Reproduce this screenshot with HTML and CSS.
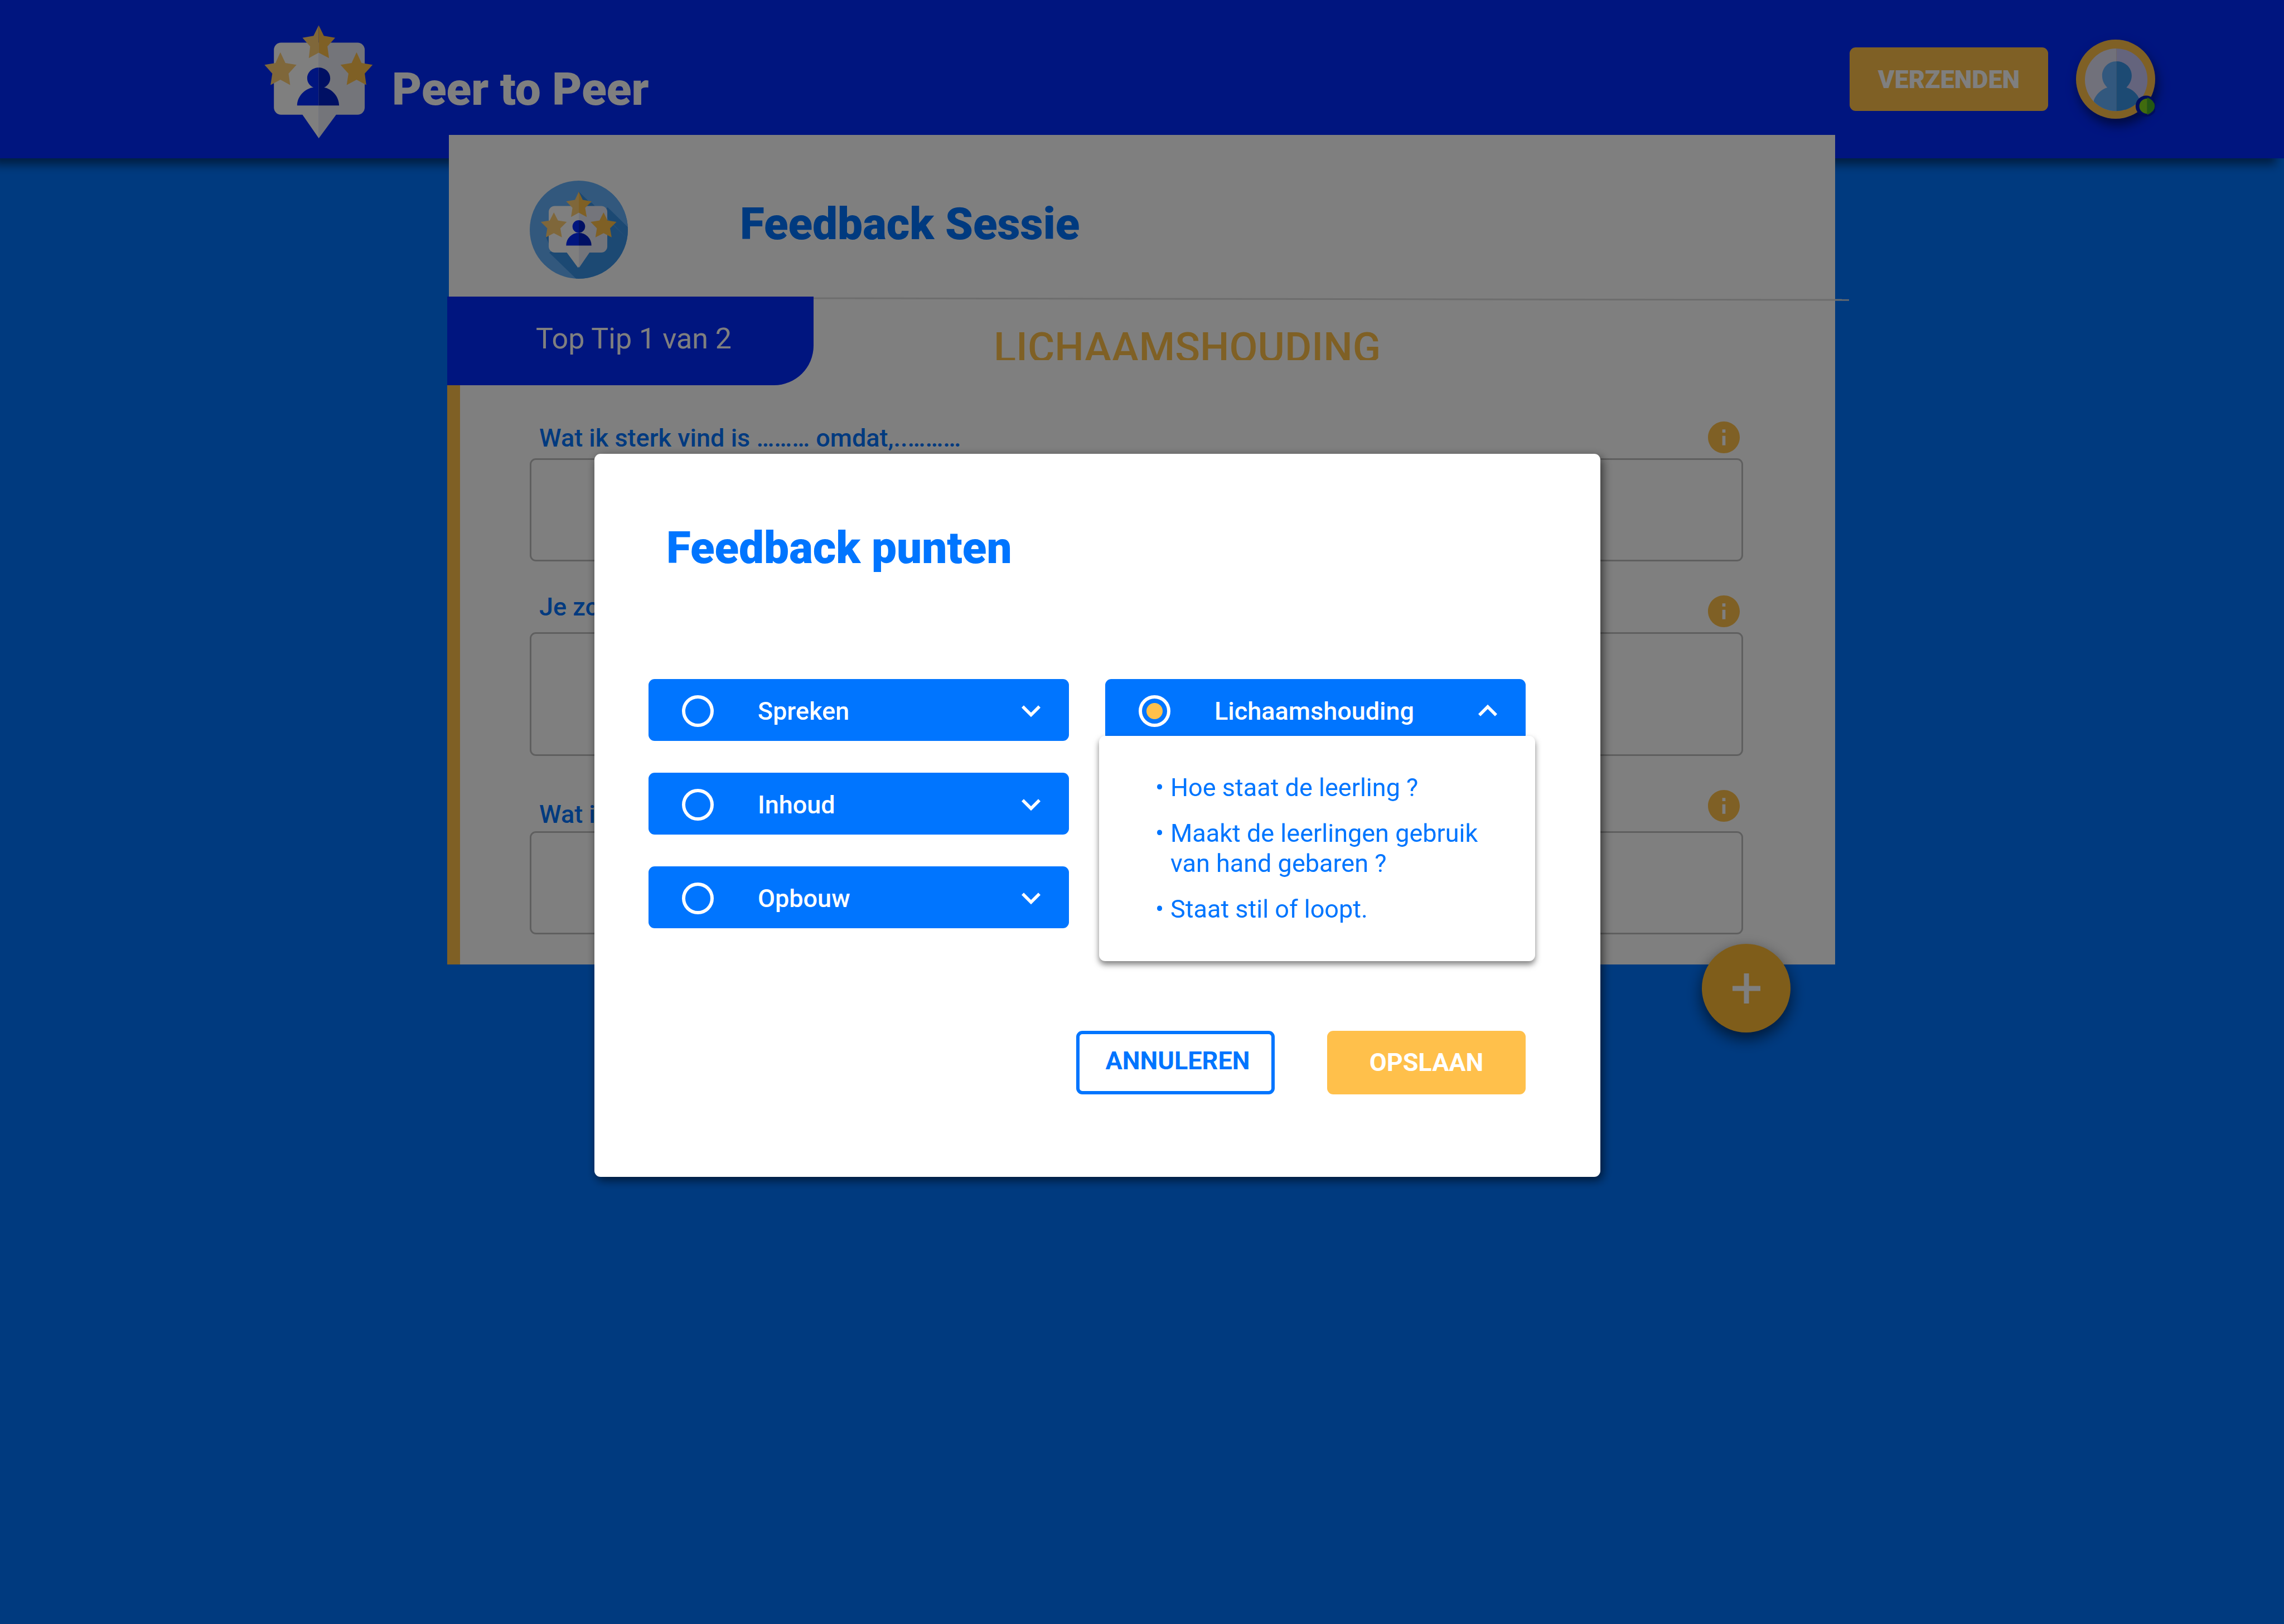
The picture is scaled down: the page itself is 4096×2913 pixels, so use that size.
FILE: index.html
```html
<!DOCTYPE html>
<html lang="nl">
<head>
<meta charset="utf-8">
<meta name="viewport" content="width=device-width, initial-scale=1">
<title>Peer to Peer</title>
<link rel="stylesheet" href="styles.css">
</head>
<body>
<div class="page">
  <header class="topbar">
    <div class="brand">
      <svg class="brand-logo" viewBox="664 60 281.25 292.5" aria-hidden="true">
        <path fill="#fff" d="M709 107H804.500V348.500L763 288.700H709A18 18 0 0 1 691 270.700V125A18 18 0 0 1 709 107Z"/>
        <path fill="#e8eaf4" d="M804 107H902A18 18 0 0 1 920 125V270.700A18 18 0 0 1 902 288.700H848L804 348.500Z"/>
        <path fill="#002aff" d="M804 170C788 170 775 181 775 197C775 207 781 216 791 220C768 223 750 243 749.500 265.500H804Z"/>
        <path fill="#0020c8" d="M804 170C820 170 833 181 833 197C833 207 827 216 817.500 220C838 224 855 243 855.500 265.500H804Z"/>
        <path fill="#ffce75" d="M804 63L791 90L763 94.700L782.400 116.700L779 146L804 132.300Z"/>
        <path fill="#ffc04b" d="M804 63L817 90L845.500 94.700L826 116.700L830 146L804 132.300Z"/>
        <path fill="#ffce75" d="M707.300 131.300L720 158.500L748 163L728 185L732 214L707.300 200.500L682.500 214L687 185L667.300 163L695 158.500Z"/>
        <path fill="#ffc04b" d="M899.500 131.300L912 158.500L940 163L920 185L924 214L899.500 200.500L874.500 214L879 185L859 163L887 158.500Z"/>
      </svg>
      <h1 class="brand-name">Peer to Peer</h1>
    </div>
    <div class="actions">
      <button class="btn btn-primary btn-send" type="button">VERZENDEN</button>
      <button class="avatar" type="button" aria-label="Profiel">
        <svg viewBox="5235 100 200 200" aria-hidden="true">
          <defs><clipPath id="face"><circle cx="5336.500" cy="201.500" r="79"/></clipPath></defs>
          <circle cx="5335" cy="200" r="100" fill="#ffc04b"/>
          <g clip-path="url(#face)">
            <path fill="#e3e3f7" d="M5250 110H5337V290H5250Z"/>
            <path fill="#c8c8fa" d="M5337 110H5425V290H5337Z"/>
            <path fill="#65b1fc" d="M5337 155C5316 155 5301 172 5301 191C5301 203 5306 214 5314 221C5298 226 5286 238 5280 253V290H5337Z"/>
            <path fill="#3894e6" d="M5337 155C5360 155 5375.700 172 5375.700 191C5375.700 203 5370 214 5362.300 221C5378 226 5390 236 5396 253V290H5337Z"/>
          </g>
          <circle cx="5412" cy="268" r="26.500" fill="#0018b8"/>
          <path fill="#80d61c" d="M5415 249A20 19.200 0 0 0 5415 287.500Z"/>
          <path fill="#48b026" d="M5415 246Q5434 254 5434 268Q5434 282 5415 290Z"/>
        </svg>
      </button>
    </div>
  </header>

  <main class="card">
    <div class="card-head">
      <svg class="card-logo" viewBox="108 108 744 744" aria-hidden="true">
        <defs><clipPath id="disc"><circle cx="480" cy="480" r="372"/></clipPath></defs>
        <g clip-path="url(#disc)">
          <path fill="#64b0fb" d="M108 108H852V852H108Z"/>
          <path fill="#3892e6" d="M480 192L860 560V860H468L256 654L276 640L228 530L400 400L560 286L577 275L602 300L690 320L698 309L860 468V560L602 300H480Z"/>
          <path fill="#64b0fb" d="M602 300H652A44 44 0 0 1 690 318L698 309L860 468V200L500 200Z"/>
          <path fill="#3892e6" d="M482 205L534 259L558 283L577 275L602 302H500Z"/>
          <path fill="#fff" d="M298 300H480V760L474 768L389 653H298A46 46 0 0 1 252 607V346A46 46 0 0 1 298 300Z"/>
          <path fill="#e9eaf6" d="M480 300H650A46 46 0 0 1 696 346V607A46 46 0 0 1 650 653H561L482 768L480 760Z"/>
        </g>
        <path fill="#002aff" d="M480 408A48 47.500 0 0 0 480 503A96 97 0 0 0 384 600H480Z"/>
        <path fill="#0020c8" d="M480 408A48 47.500 0 0 1 480 503A96 97 0 0 1 576 600H480Z"/>
        <path fill="#ffce75" d="M480 192L451 254L384 265L432 314L421 384L480 351Z"/>
        <path fill="#ffc04b" d="M480 192L510 254L577 265L528 314L540 384L480 351Z"/>
        <path fill="#ffce75" d="M291 349L322 410L389 421L340 469L352 538L291 506L230 538L241 469L192 421L260 410Z"/>
        <path fill="#ffc04b" d="M668 349L698 410L766 421L717 469L729 538L668 506L606 538L617 469L569 421L637 410Z"/>
      </svg>
      <h2 class="title">Feedback Sessie</h2>
    </div>

    <section class="session">
      <div class="session-head">
        <p class="tab">Top Tip 1 van 2</p>
        <h3 class="topic">LICHAAMSHOUDING</h3>
        <svg class="divider" viewBox="0 0 1857 7" preserveAspectRatio="none" aria-hidden="true">
          <path d="M0 2L1857 5" stroke="#dadada" stroke-width="3"/>
        </svg>
      </div>

      <form class="form">
        <div class="field">
          <div class="field-head">
            <label class="field-label" for="sterk">Wat ik sterk vind is ……… omdat,..………</label>
            <button class="info" type="button" aria-label="Info"><svg viewBox="2 2 20 20" aria-hidden="true"><path d="M12 2C6.480 2 2 6.480 2 12s4.480 10 10 10 10-4.480 10-10S17.520 2 12 2zm1 15h-2v-6h2v6zm0-8h-2V7h2v2z"/></svg></button>
          </div>
          <textarea class="field-box" id="sterk"></textarea>
        </div>
        <div class="field field-second">
          <div class="field-head">
            <label class="field-label" for="tip">Je zo</label>
            <button class="info" type="button" aria-label="Info"><svg viewBox="2 2 20 20" aria-hidden="true"><path d="M12 2C6.480 2 2 6.480 2 12s4.480 10 10 10 10-4.480 10-10S17.520 2 12 2zm1 15h-2v-6h2v6zm0-8h-2V7h2v2z"/></svg></button>
          </div>
          <textarea class="field-box" id="tip"></textarea>
        </div>
        <div class="field field-third">
          <div class="field-head">
            <label class="field-label" for="leer">Wat i</label>
            <button class="info" type="button" aria-label="Info"><svg viewBox="2 2 20 20" aria-hidden="true"><path d="M12 2C6.480 2 2 6.480 2 12s4.480 10 10 10 10-4.480 10-10S17.520 2 12 2zm1 15h-2v-6h2v6zm0-8h-2V7h2v2z"/></svg></button>
          </div>
          <textarea class="field-box" id="leer"></textarea>
        </div>
      </form>
    </section>

    <button class="fab" type="button" aria-label="Toevoegen">
      <svg viewBox="0 0 50 54" aria-hidden="true"><path d="M20.500 0H29.500V22.500H50V31.500H29.500V54H20.500V31.500H0V22.500H20.500Z"/></svg>
    </button>
  </main>
</div>

<div class="overlay">
  <div class="modal" role="dialog" aria-labelledby="modal-title">
    <h2 class="title modal-title" id="modal-title">Feedback punten</h2>
    <div class="options">
      <div class="options-col">
        <div class="option">
          <label class="option-label"><input class="radio" type="radio" name="punt">Spreken</label>
          <button class="chevron" type="button" aria-label="Openen"><svg viewBox="0 0 24 24" aria-hidden="true"><path d="M16.590 8.590L12 13.170 7.410 8.590 6 10l6 6 6-6z"/></svg></button>
        </div>
        <div class="option">
          <label class="option-label"><input class="radio" type="radio" name="punt">Inhoud</label>
          <button class="chevron" type="button" aria-label="Openen"><svg viewBox="0 0 24 24" aria-hidden="true"><path d="M16.590 8.590L12 13.170 7.410 8.590 6 10l6 6 6-6z"/></svg></button>
        </div>
        <div class="option">
          <label class="option-label"><input class="radio" type="radio" name="punt">Opbouw</label>
          <button class="chevron" type="button" aria-label="Openen"><svg viewBox="0 0 24 24" aria-hidden="true"><path d="M16.590 8.590L12 13.170 7.410 8.590 6 10l6 6 6-6z"/></svg></button>
        </div>
      </div>
      <div class="options-col">
        <div class="option-open">
          <div class="option">
            <label class="option-label"><input class="radio" type="radio" name="punt" checked>Lichaamshouding</label>
            <button class="chevron" type="button" aria-label="Sluiten"><svg viewBox="0 0 24 24" aria-hidden="true"><path d="M12 8l-6 6 1.410 1.410L12 10.830l4.590 4.580L18 14z"/></svg></button>
          </div>
          <ul class="points">
            <li>Hoe staat de leerling ?</li>
            <li>Maakt de leerlingen gebruik van hand gebaren ?</li>
            <li>Staat stil of loopt.</li>
          </ul>
        </div>
      </div>
    </div>
    <div class="modal-actions">
      <button class="btn btn-outline" type="button">ANNULEREN</button>
      <button class="btn btn-primary" type="button">OPSLAAN</button>
    </div>
  </div>
</div>
</body>
</html>
```
FILE: styles.css
```css
* {
  box-sizing: border-box;
}

:root {
  --blue: #0075ff;
  --navy: #002aff;
  --gold: #ffc04b;
}

body {
  margin: 0;
  font-family: Roboto, "Liberation Sans", sans-serif;
  font-size: 45px;
  background: var(--blue);
}

h1, h2, h3, p, ul {
  margin: 0;
  padding: 0;
}

button, textarea {
  font: inherit;
}

button {
  border: 0;
  padding: 0;
  background: none;
  cursor: pointer;
}

svg {
  display: block;
}

.page {
  min-height: 100vh;
}

/* Top bar */
.topbar {
  display: flex;
  justify-content: space-between;
  align-items: flex-start;
  height: 284px;
  padding: 0 231px 0 472px;
  background: var(--navy);
  box-shadow: -14px 11px 17px rgba(0, 0, 0, .5);
}

.brand {
  display: flex;
  gap: 31px;
  padding-top: 43px;
}

.brand-logo {
  width: 200px;
  height: 208px;
}

.brand-name {
  padding-top: 69px;
  font-size: 82px;
  line-height: 96px;
  font-weight: 900;
  color: #fff;
}

.actions {
  display: flex;
  align-items: center;
  gap: 50px;
  height: 284px;
}

.btn {
  width: 356px;
  height: 114px;
  border-radius: 11px;
  font-size: 45px;
  font-weight: 700;
}

.btn-primary {
  background: var(--gold);
  color: #fff;
}

.btn-send {
  font-weight: 900;
}

.btn-outline {
  border: 6px solid var(--blue);
  padding: 0 0 6px 8px;
  background: #fff;
  color: var(--blue);
}

.avatar {
  width: 142px;
  height: 142px;
  border-radius: 50%;
  box-shadow: 4px 11px 20px rgba(0, 0, 0, .5);
}

/* Session card */
.card {
  position: relative;
  max-width: 2486px;
  margin: -42px auto 0;
  background: #fff;
}

.card-head {
  display: flex;
  gap: 201px;
  height: 290px;
  padding: 82px 145px 0;
}

.card-logo {
  width: 176px;
  height: 176px;
}

.title {
  font-size: 80px;
  line-height: 156px;
  font-weight: 900;
  color: var(--blue);
}

.session {
  margin-left: -3px;
  background: #fff;
}

.session-head {
  position: relative;
  display: flex;
  align-items: flex-start;
  gap: 323px;
}

.tab {
  width: 657px;
  height: 159px;
  padding-left: 159px;
  border-radius: 0 0 71px 0;
  background: var(--navy);
  color: #fff;
  font-size: 52px;
  line-height: 152px;
}

.topic {
  height: 66px;
  margin-top: 48px;
  overflow: hidden;
  font-size: 74px;
  line-height: 87px;
  font-weight: 500;
  color: var(--gold);
}

.divider {
  position: absolute;
  top: 1px;
  left: 657px;
  width: calc(100% - 632px);
  height: 7px;
}

.form {
  display: flex;
  flex-direction: column;
  gap: 61px;
  padding: 65px 165px 54px 125px;
  border-left: 23px solid var(--gold);
}

.field-head {
  display: flex;
  justify-content: space-between;
  align-items: flex-start;
  height: 66px;
  padding: 0 6px 0 17px;
}

.field-label {
  padding-top: 10px;
  line-height: 40px;
  font-weight: 500;
  color: var(--blue);
}

.field-box {
  display: block;
  width: 100%;
  height: 185px;
  padding: 20px;
  border: 3px solid #bfbfbf;
  border-radius: 11px;
  background: #fff;
  resize: none;
}

.field-second .field-label {
  padding-top: 1px;
}

.field-second .field-box {
  height: 222px;
}

.field-third .field-head {
  height: 74px;
}

.field-third .field-label {
  padding-top: 24px;
}

.info {
  width: 57px;
  height: 57px;
  fill: var(--gold);
}

.fab {
  position: absolute;
  right: 80px;
  bottom: -122px;
  display: grid;
  place-items: center;
  width: 159px;
  height: 159px;
  border-radius: 50%;
  background: #ffbb35;
  box-shadow: 0 11px 28px rgba(0, 0, 0, .6);
}

.fab svg {
  width: 50px;
  height: 54px;
  fill: #fff;
}

/* Dialog */
.overlay {
  position: fixed;
  inset: 0;
  display: flex;
  justify-content: center;
  align-items: center;
  padding: 11px 160px 0 0;
  background: rgba(0, 0, 0, .5);
}

.modal {
  width: 1804px;
  padding: 122px 134px 148px 97px;
  border-radius: 11px;
  background: #fff;
  box-shadow: 4px 6px 17px rgba(0, 0, 0, .6);
}

.modal-title {
  padding-left: 32px;
  line-height: 94px;
}

.options {
  display: grid;
  grid-template-columns: 1fr 1fr;
  gap: 65px;
  margin-top: 188px;
}

.options-col {
  display: flex;
  flex-direction: column;
  gap: 57px;
}

.option {
  display: flex;
  justify-content: space-between;
  align-items: center;
  height: 111px;
  padding: 4px 34px 0 60px;
  border-radius: 11px;
  background: var(--blue);
  color: #fff;
}

.option-label {
  display: flex;
  align-items: center;
  gap: 79px;
  font-weight: 500;
}

.radio {
  appearance: none;
  width: 57px;
  height: 57px;
  margin: 0;
  border: 6px solid #fff;
  border-radius: 50%;
}

.radio:checked {
  background: radial-gradient(circle, var(--gold) 14px, transparent 15px);
}

.chevron {
  width: 68px;
  height: 68px;
  fill: #fff;
}

.points {
  position: relative;
  display: flex;
  flex-direction: column;
  gap: 28px;
  margin: -9px -17px 0 -11px;
  padding: 66px 60px 66px 101px;
  border-radius: 11px;
  background: #fff;
  box-shadow: 0 6px 11px rgba(0, 0, 0, .5);
  list-style: none;
  line-height: 54px;
  color: var(--blue);
}

.points li {
  display: flex;
}

.points li::before {
  content: "•";
  flex: 0 0 27px;
}

.modal-actions {
  display: flex;
  justify-content: flex-end;
  gap: 94px;
  margin-top: 125px;
}
```
